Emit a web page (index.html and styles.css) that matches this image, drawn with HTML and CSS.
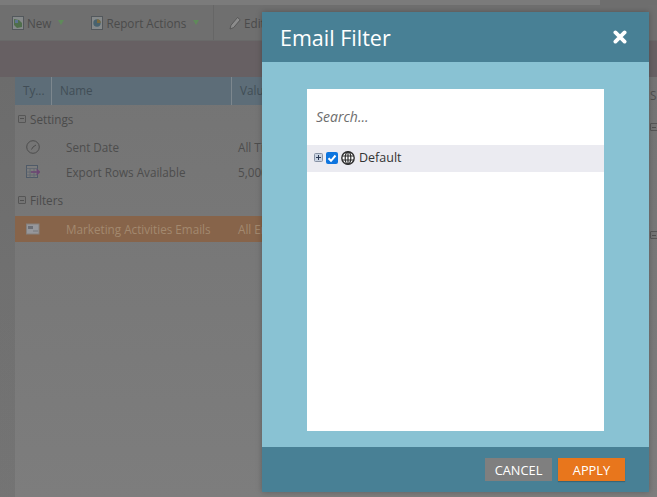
FILE: index.html
```html
<!DOCTYPE html>
<html lang="en">
<head>
<meta charset="utf-8">
<title>Email Filter</title>
<link rel="stylesheet" href="styles.css">
</head>
<body>
<div class="page">
  <div class="topbar"></div>
  <div class="toolbar">
    <div class="tool-group">
      <span class="tool">
        <svg class="tool-icon" viewBox="0 0 12 14"><rect x="0.500" y="0.500" width="11" height="13" fill="#85898a" stroke="#53585c"/><path d="M2 3l5 1 3 3v4l-5 1-3-3z" fill="#4f6e4b"/><path d="M3 4h3v3H3z" fill="#5d7391"/></svg>
        New <i class="caret"></i>
      </span>
      <span class="tool tool-report">
        <svg class="tool-icon" viewBox="0 0 12 14"><rect x="0.500" y="0.500" width="11" height="13" fill="#85898a" stroke="#53585c"/><circle cx="6" cy="7" r="3.700" fill="#48626e"/><path d="M6 3.300a3.700 3.700 0 0 1 3.700 3.700H6z" fill="#7a6a3e"/></svg>
        Report Actions <i class="caret"></i>
      </span>
    </div>
    <span class="tool tool-edit">
      <svg class="tool-icon" viewBox="0 0 12 14"><path d="M1 13l1-3.800 6.500-7.700 2.700 2.300-6.500 7.700z" fill="#8c8c8c" stroke="#4f4f4f" stroke-width="0.800"/></svg>
      Edit
    </span>
  </div>
  <div class="band"></div>
  <div class="content">
    <div class="table">
      <div class="thead">
        <span class="th th-type">Ty...</span>
        <span class="th th-name">Name</span>
        <span class="th th-value">Value</span>
      </div>
      <div class="group group-settings"><i class="minus"></i>Settings</div>
      <div class="row">
        <span class="cell-icon"><svg viewBox="0 0 14 14" width="14" height="14"><circle cx="7" cy="7" r="6.300" fill="none" stroke="#4d4d4d"/><path d="M7 7l-1.500 2.500M7 7l3-2" stroke="#4d4d4d"/></svg></span>
        <span class="cell-name">Sent Date</span><span class="cell-value">All Time</span>
      </div>
      <div class="row">
        <span class="cell-icon"><svg viewBox="0 0 14 14" width="14" height="14"><rect x="0.500" y="0.500" width="11" height="12" fill="#7c7c7c" stroke="#4f5a68"/><path d="M0.500 3.500h11M0.500 7h11M0.500 10h11M4 3.500v9M8 3.500v9" stroke="#5e6670" stroke-width="0.800"/><path d="M5 7h8M10.500 4.500l3 2.500-3 2.500" fill="none" stroke="#6d4574" stroke-width="1.400"/></svg></span>
        <span class="cell-name">Export Rows Available</span><span class="cell-value">5,000</span>
      </div>
      <div class="group group-filters"><i class="minus"></i>Filters</div>
      <div class="row row-selected">
        <span class="cell-icon"><svg viewBox="0 0 14 12" width="14" height="12"><rect x="0.500" y="1" width="12.500" height="10" fill="#96979b" stroke="#86807c"/><rect x="2" y="3" width="5" height="3" fill="#6c6e74"/><path d="M7 8h5" stroke="#77787c"/></svg></span>
        <span class="cell-name">Marketing Activities Emails</span><span class="cell-value">All Emails</span>
      </div>
    </div>
    <div class="side">
      <div class="side-head">S</div>
      <i class="minus side-minus"></i>
      <i class="minus side-minus side-minus-low"></i>
    </div>
  </div>
  <div class="modal">
    <div class="modal-head">
      <h1 class="modal-title">Email Filter</h1>
      <svg class="close" viewBox="0 0 14 14" width="14" height="14"><path d="M2.400 2.400l9.200 9.200M11.600 2.400l-9.200 9.200" stroke="#fff" stroke-width="3.800" stroke-linecap="round"/></svg>
    </div>
    <div class="modal-body">
      <div class="panel">
        <div class="search">Search...</div>
        <div class="tree-row">
          <svg class="expander" viewBox="0 0 9 9" width="9" height="9"><rect x="0.500" y="0.500" width="8" height="8" rx="1" fill="#c9d3e2" stroke="#8791a3"/><path d="M2 4.500h5M4.500 2v5" stroke="#2c3a55"/></svg>
          <span class="check"><svg viewBox="0 0 12 12" width="12" height="12"><path d="M2.500 6.300l2.500 2.500 4.500-5.300" fill="none" stroke="#fff" stroke-width="2"/></svg></span>
          <svg class="globe" viewBox="0 0 14 14" width="14" height="14"><circle cx="7" cy="7" r="6.200" fill="#fff" stroke="#2e2e2e" stroke-width="1.400"/><ellipse cx="7" cy="7" rx="2.800" ry="6.200" fill="none" stroke="#2e2e2e" stroke-width="1.200"/><path d="M7 1v12M1 5h12M1 9h12" stroke="#2e2e2e" stroke-width="1.200"/></svg>
          <span class="tree-label">Default</span>
        </div>
      </div>
    </div>
    <div class="modal-foot">
      <button class="btn btn-cancel">CANCEL</button>
      <button class="btn btn-apply">APPLY</button>
    </div>
  </div>
</div>
</body>
</html>
```
FILE: styles.css
```css
* { box-sizing: border-box; }
html, body { margin: 0; padding: 0; }
body { font-family: "Open Sans", "Liberation Sans", sans-serif; background: #6e6e6e; }
.page { position: relative; width: 657px; height: 497px; overflow: hidden; background: #6e6e6e; color: #4b4b4b; font-size: 11.7px; }
.topbar { height: 5px; width: 600px; background: #7b7b7b; }
.toolbar { height: 36px; display: flex; align-items: center; background: #6f6f6f; border-bottom: 1px solid #696969; }
.tool-group { display: flex; height: 100%; align-items: center; padding-left: 12px; width: 214px; border-right: 1px solid #666; }
.tool { display: inline-flex; align-items: center; gap: 3px; color: #4b4b4b; white-space: nowrap; }
.tool-report { margin-left: 27px; }
.tool-edit { margin-left: 15px; }
.tool-icon { width: 12px; height: 14px; }
.caret { width: 0; height: 0; margin-left: 4px; border-left: 3.500px solid transparent; border-right: 3.500px solid transparent; border-top: 5px solid #5f8a5a; }
.band { height: 36px; background: #676063; }
.content { height: 420px; display: flex; padding-left: 15px; background: linear-gradient(90deg, rgba(0,0,0,0.07) 15px, transparent 15px), linear-gradient(#747474, #7d7d7d); }
.table { width: 634px; display: flex; flex-direction: column; }
.thead { height: 28px; flex: none; display: flex; background: #5d6d78; color: #414d56; line-height: 27px; }
.th { display: block; padding-left: 8px; border-right: 1px solid #7d878e; }
.th-type { width: 37px; }
.th-name { width: 180px; }
.th-value { flex: 1; border-right: 0; }
.group { height: 29px; flex: none; display: flex; align-items: center; padding-left: 3px; color: #4b4b4b; }
.group-settings { padding-bottom: 2px; }
.group-filters { height: 32px; }
.minus { width: 8px; height: 8px; margin-right: 4px; border: 1px solid #565656; border-radius: 1px; background: linear-gradient(#505050, #505050) center / 4px 1px no-repeat, #747474; }
.row { height: 25px; flex: none; display: flex; align-items: center; color: #4d4d4d; white-space: nowrap; }
.row-selected { height: 26px; background: #87644a; color: #a3896f; }
.cell-icon { width: 51px; padding-left: 11px; display: flex; }
.cell-name { width: 172px; }
.cell-value { flex: 1; }
.side { flex: 1; display: flex; flex-direction: column; align-items: flex-start; padding-left: 1px; overflow: hidden; }
.side-head { height: 28px; line-height: 36px; color: #4f4f4f; }
.side-minus { margin-top: 18px; display: block; flex: none; }
.side-minus-low { margin-top: 100px; }
.modal { position: absolute; left: 262px; top: 12px; width: 387px; height: 480px; display: flex; flex-direction: column; box-shadow: 0 0 6px rgba(0,0,0,0.25); }
.modal-head { height: 50px; display: flex; align-items: center; justify-content: space-between; padding: 0 22px 0 18px; background: #488095; }
.modal-title { margin: 0; font-size: 21.500px; font-weight: 400; color: #fff; }
.close { display: block; }
.modal-body { flex: 1; padding: 27px 45px 16px; background: #89c2d3; }
.panel { height: 342px; background: #fff; }
.search { height: 56px; padding-left: 9px; line-height: 55px; font-size: 14px; font-style: italic; color: #6d6d6d; }
.tree-row { height: 27px; display: flex; align-items: center; padding: 0 0 2px 7px; background: #ebebf1; }
.expander { display: block; margin-right: 3px; }
.check { width: 12px; height: 12px; margin-right: 3px; display: block; background: #0d75df; border-radius: 2px; }
.check svg { display: block; }
.globe { display: block; margin-right: 4px; }
.tree-label { font-size: 12.500px; color: #333; }
.modal-foot { height: 45px; display: flex; justify-content: flex-end; align-items: center; gap: 6px; padding-right: 24px; background: #488095; }
.btn { width: 67px; height: 23px; border: 0; padding: 0; font-family: inherit; font-size: 12.800px; color: #fff; }
.btn-cancel { background: #7f7f7f; }
.btn-apply { background: #e8761c; box-shadow: 0 1px 1px rgba(0,0,0,0.2); }
```
